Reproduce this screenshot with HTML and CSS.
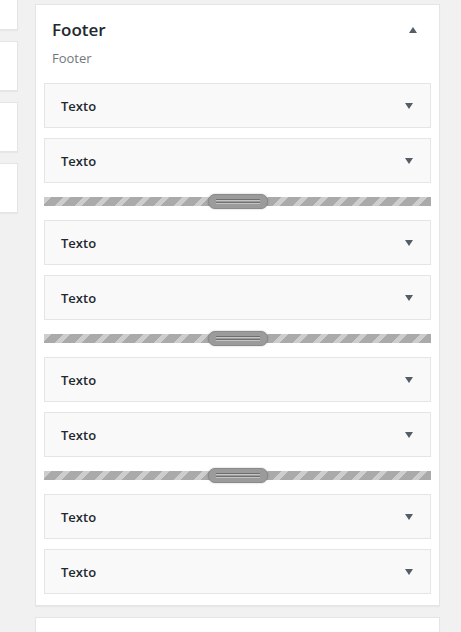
FILE: index.html
```html
<!DOCTYPE html>
<html lang="es">
<head>
  <meta charset="UTF-8">
  <meta name="viewport" content="width=device-width, initial-scale=1">
  <title>Footer</title>
  <link rel="stylesheet" href="styles.css">
</head>
<body>
  <div class="layout">
    <div class="side">
      <div class="side-card first"></div>
      <div class="side-card"></div>
      <div class="side-card"></div>
      <div class="side-card"></div>
    </div>

    <div class="main">
      <div class="panel">
        <div class="panel-head">
          <h3>Footer</h3>
          <span class="toggle up"></span>
        </div>
        <p class="desc">Footer</p>

        <div class="items">
          <div class="item"><span>Texto</span><span class="toggle"></span></div>
          <div class="item"><span>Texto</span><span class="toggle"></span></div>
          <div class="divider"><span class="grip"></span></div>
          <div class="item"><span>Texto</span><span class="toggle"></span></div>
          <div class="item"><span>Texto</span><span class="toggle"></span></div>
          <div class="divider"><span class="grip"></span></div>
          <div class="item"><span>Texto</span><span class="toggle"></span></div>
          <div class="item"><span>Texto</span><span class="toggle"></span></div>
          <div class="divider"><span class="grip"></span></div>
          <div class="item"><span>Texto</span><span class="toggle"></span></div>
          <div class="item"><span>Texto</span><span class="toggle"></span></div>
        </div>
      </div>
      <div class="panel next"></div>
    </div>
  </div>
</body>
</html>
```

FILE: styles.css
```css
body {
  margin: 0;
  background: #f1f1f1;
  font-family: "Open Sans", "Liberation Sans", sans-serif;
  color: #23282d;
  overflow: hidden;
}
.layout {
  display: flex;
  height: 632px;
}
.side {
  width: 18px;
  flex: none;
  display: flex;
  flex-direction: column;
  gap: 11px;
}
.side-card {
  height: 48px;
  background: #fff;
  border: 1px solid #e5e5e5;
  border-left: none;
  box-shadow: 0 1px 1px rgba(0, 0, 0, .04);
}
.side-card.first {
  height: 29px;
  margin-top: -1px;
}
.main {
  margin-left: 17px;
  width: 405px;
  padding-top: 4px;
}
.panel {
  background: #fff;
  border: 1px solid #e5e5e5;
  box-shadow: 0 1px 1px rgba(0, 0, 0, .04);
  padding: 0 8px 11px;
}
.panel.next {
  margin-top: 11px;
  height: 40px;
  padding: 0;
}
.panel-head {
  display: flex;
  justify-content: space-between;
  align-items: center;
  padding: 13px 14px 0 8px;
}
.panel-head h3 {
  margin: 0;
  font-size: 17px;
  font-weight: 600;
  line-height: 24px;
}
.desc {
  margin: 7px 0 16px 8px;
  font-size: 13px;
  line-height: 18px;
  color: #72777c;
}
.items {
  display: flex;
  flex-direction: column;
}
.item {
  height: 43px;
  background: #f9f9f9;
  border: 1px solid #e5e5e5;
  display: flex;
  justify-content: space-between;
  align-items: center;
  padding: 0 17px 0 16px;
  font-size: 13px;
  font-weight: 600;
  margin-bottom: 10px;
}
.item:last-child {
  margin-bottom: 0;
}
.toggle {
  width: 0;
  height: 0;
  border-left: 4px solid transparent;
  border-right: 4px solid transparent;
  border-top: 6px solid #555d66;
}
.toggle.up {
  border-top: none;
  border-bottom: 6px solid #555d66;
}
.divider {
  height: 9px;
  margin: 4px 0 14px;
  background: repeating-linear-gradient(-45deg, #aaaaaa 0, #aaaaaa 9px, #cdcdcd 9px, #cdcdcd 14px);
  display: flex;
  justify-content: center;
  align-items: center;
}
.grip {
  width: 58px;
  height: 13px;
  border-radius: 7px;
  background: #9b9b9b;
  border: 1px solid #8a8a8a;
  box-shadow: 0 0 2px rgba(0, 0, 0, .25);
  position: relative;
}
.grip::before {
  content: "";
  position: absolute;
  left: 7px;
  right: 7px;
  top: 4px;
  height: 1px;
  background: #6f6f6f;
  box-shadow: 0 1px 0 #c4c4c4, 0 3px 0 #6f6f6f, 0 4px 0 #c4c4c4;
}
```
